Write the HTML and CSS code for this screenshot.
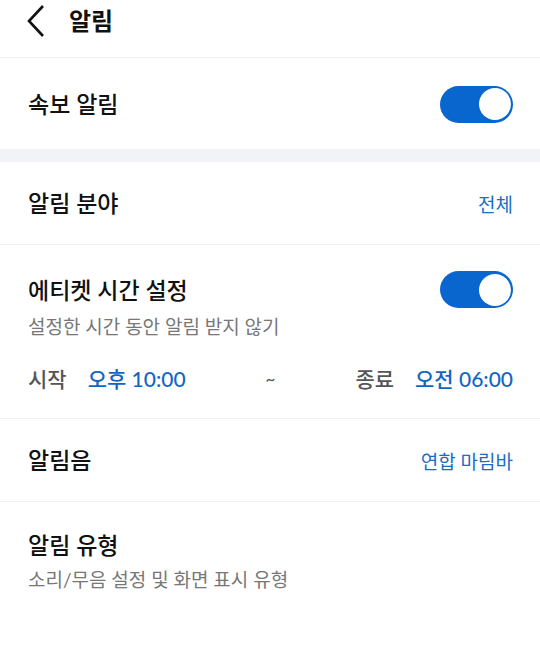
FILE: index.html
```html
<!DOCTYPE html>
<html lang="ko">
<head>
<meta name="viewport" content="width=device-width, initial-scale=1">
<title>알림</title>
<link rel="stylesheet" href="styles.css">
</head>
<body>
<div class="header">
  <svg class="back" width="20" height="34" viewBox="0 0 20 34">
    <polyline points="17,2 3,17 17,32" fill="none" stroke="#111" stroke-width="2.6" stroke-linejoin="miter"/>
  </svg>
  <span class="header-title">알림</span>
</div>

<div class="row row-first">
  <span class="title">속보 알림</span>
  <span class="toggle"><span class="knob"></span></span>
</div>

<div class="band"></div>

<div class="row row-mid">
  <span class="title">알림 분야</span>
  <span class="link">전체</span>
</div>

<div class="block">
  <div class="block-head">
    <span class="title">에티켓 시간 설정</span>
    <span class="toggle"><span class="knob"></span></span>
  </div>
  <div class="sub">설정한 시간 동안 알림 받지 않기</div>
  <div class="times">
    <div class="time"><span class="label">시작</span><span class="value">오후 10:00</span></div>
    <span class="tilde">~</span>
    <div class="time"><span class="label">종료</span><span class="value">오전 06:00</span></div>
  </div>
</div>

<div class="row row-mid">
  <span class="title">알림음</span>
  <span class="link">연합 마림바</span>
</div>

<div class="block block-last">
  <div class="title">알림 유형</div>
  <div class="sub">소리/무음 설정 및 화면 표시 유형</div>
</div>
</body>
</html>
```

FILE: styles.css
```css
body {
  margin: 0;
  background: #fff;
  color: #111;
  font-family: Lato, "Noto Sans CJK KR", sans-serif;
}

.header {
  height: 58px;
  box-sizing: border-box;
  display: flex;
  align-items: flex-start;
  padding: 4px 0 0 26px;
  border-bottom: 1px solid #f0f0f0;
}

.back {
  display: block;
}

.header-title {
  margin-left: 23px;
  font-size: 24px;
  line-height: 34px;
  font-weight: 700;
}

.row {
  display: flex;
  align-items: center;
  justify-content: space-between;
  padding: 0 27px 0 28px;
  border-bottom: 1px solid #f0f0f0;
  box-sizing: border-box;
}

.row-first {
  height: 91px;
  border-bottom: none;
  padding-top: 1px;
}

.row-mid {
  height: 83px;
}

.title {
  font-size: 23px;
  line-height: 30px;
  font-weight: 500;
  color: #111;
}

.link {
  font-size: 19px;
  color: #1a6cc4;
}

.band {
  height: 13px;
  background: #f2f3f7;
}

.toggle {
  width: 73px;
  height: 37px;
  border-radius: 19px;
  background: #0a66cf;
  display: flex;
  align-items: center;
  justify-content: flex-end;
  padding-right: 2px;
  box-sizing: border-box;
}

.knob {
  width: 32px;
  height: 32px;
  border-radius: 50%;
  background: #fff;
}

.block {
  padding: 26px 27px 0 28px;
  border-bottom: 1px solid #f0f0f0;
  height: 174px;
  box-sizing: border-box;
}

.block-head {
  display: flex;
  align-items: center;
  justify-content: space-between;
}

.sub {
  margin-top: 7px;
  font-size: 19px;
  line-height: 24px;
  color: #777;
}

.times {
  margin-top: 25px;
  height: 28px;
  display: flex;
  align-items: center;
  justify-content: space-between;
  font-size: 21px;
}

.time {
  display: flex;
  align-items: center;
  gap: 21px;
}

.label {
  color: #555;
  font-weight: 500;
}

.value {
  color: #1166c4;
  font-weight: 500;
}

.tilde {
  color: #555;
  font-size: 17px;
}

.block-last {
  border-bottom: none;
  padding-top: 28px;
}

.block-last .sub {
  margin-top: 8px;
}
```
